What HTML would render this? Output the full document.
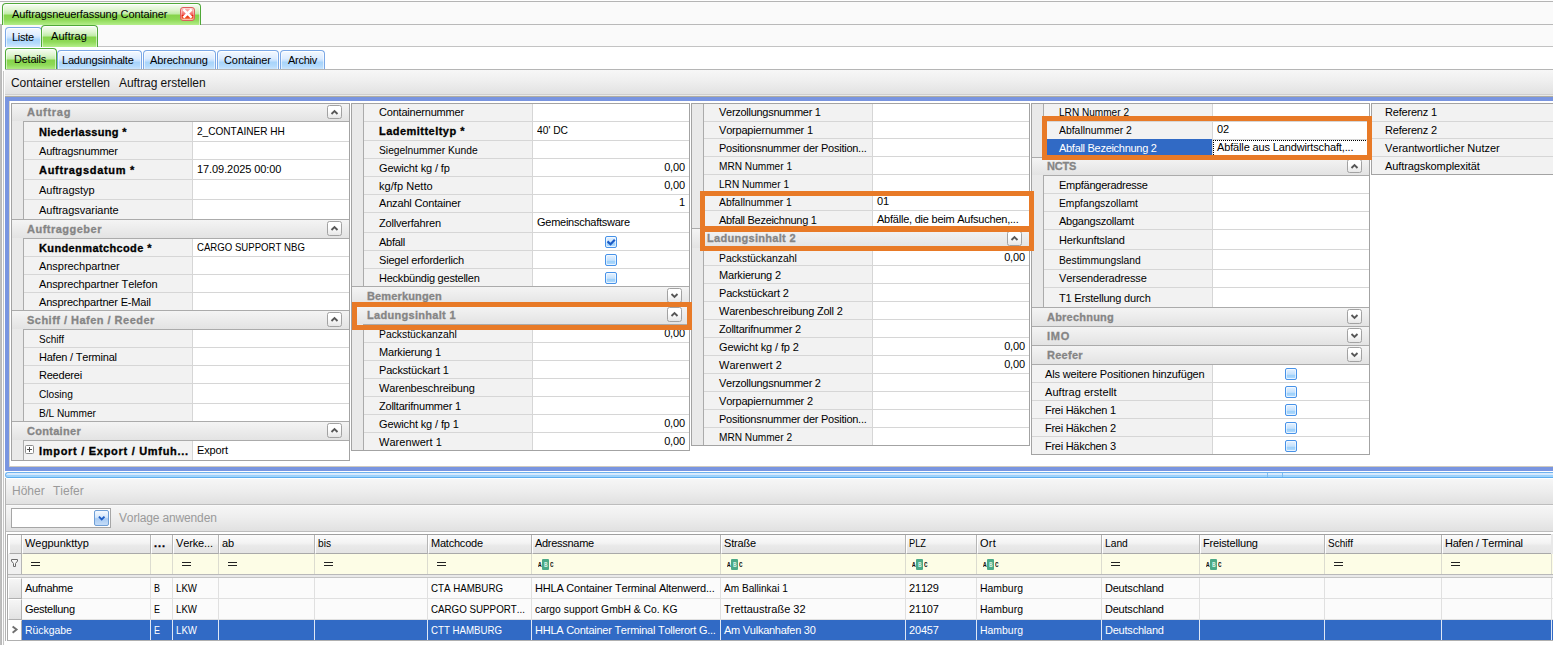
<!DOCTYPE html>
<html lang="de"><head><meta charset="utf-8"><title>Auftragsneuerfassung Container</title><style>
html,body{margin:0;padding:0;}
body{width:1553px;height:645px;overflow:hidden;background:#fff;position:relative;font-family:"Liberation Sans",sans-serif;font-size:11px;color:#000;}
div{position:absolute;}
.g{left:0;top:0;width:0;height:0;}
.t{white-space:nowrap;font-kerning:none;}
</style></head><body>
<div class="g" id="chrome">
<div style="left:0px;top:0px;width:1553px;height:1px;background:#fdfdfd;"></div>
<div style="left:0px;top:1px;width:1553px;height:1px;background:#b4b4b4;"></div>
<div style="left:0px;top:2px;width:1553px;height:22px;background:#fafafa;"></div>
<div style="left:0px;top:24px;width:1553px;height:1px;background:#b9b9b9;"></div>
<div style="left:0px;top:25px;width:1553px;height:21px;background:#fafafa;"></div>
<div style="left:3px;top:46px;width:1553px;height:1px;background:#c3c3c3;"></div>
<div style="left:3px;top:47px;width:1553px;height:22px;background:#fff;"></div>
<div style="left:0px;top:25px;width:2px;height:620px;background:linear-gradient(90deg,#c2c2c2,#b4b4b4);"></div>
<div style="left:2px;top:25px;width:3px;height:620px;background:#fdfdfd;"></div>
<div style="left:3px;top:71px;width:1px;height:574px;background:#c6c6c6;"></div>
</div>
<div class="g" id="tabs">
<div style="left:2px;top:3px;width:199px;height:22px;background:linear-gradient(#f8fdf5 0%,#def5cf 28%,#c2ecaa 46%,#86d44b 54%,#8ed957 75%,#b4ee8a 100%);border:1px solid #4fa838;border-bottom:none;border-radius:4px 4px 0 0;box-sizing:border-box;box-shadow:inset 0 1px 0 #fff,inset 1px 0 0 rgba(255,255,255,0.55),inset -1px 0 0 rgba(255,255,255,0.55);"></div>
<div class="t" style="left:12px;top:4px;height:21px;line-height:21px;letter-spacing:-0.10px;">Auftragsneuerfassung Container</div>
<div style="left:180px;top:7px;width:15px;height:14px;box-sizing:border-box;border:1px solid #de5f5f;border-radius:3px;background:linear-gradient(#fbc0bd 0%,#f78f8a 35%,#f2605a 55%,#e82408 62%,#ee4a20 80%,#ffb692 100%);box-shadow:inset 0 0 0 1px rgba(255,255,255,0.35);"><svg width="13" height="12" viewBox="0 0 13 12" style="position:absolute;left:0;top:0"><path d="M3.3 2.3 L9.7 8.7 M9.7 2.3 L3.3 8.7" stroke="#fff" stroke-width="2.5" stroke-linecap="square"/></svg></div>
<div style="left:5px;top:27px;width:37px;height:20px;background:linear-gradient(#f4f9ff 0%,#dcecff 40%,#c8e2fe 50%,#a8d4fb 60%,#b4dafc 80%,#d2e9ff 100%);border:1px solid #7ba8e6;border-bottom:none;border-radius:4px 4px 0 0;box-sizing:border-box;box-shadow:inset 0 1px 0 #fff,inset 1px 0 0 rgba(255,255,255,0.6),inset -1px 0 0 rgba(255,255,255,0.6);"></div>
<div class="t" style="left:12px;top:28px;height:19px;line-height:19px;letter-spacing:-0.26px;">Liste</div>
<div style="left:41px;top:25px;width:57px;height:22px;background:linear-gradient(#f8fdf5 0%,#def5cf 28%,#c2ecaa 46%,#86d44b 54%,#8ed957 75%,#b4ee8a 100%);border:1px solid #4fa838;border-bottom:none;border-radius:4px 4px 0 0;box-sizing:border-box;box-shadow:inset 0 1px 0 #fff,inset 1px 0 0 rgba(255,255,255,0.55),inset -1px 0 0 rgba(255,255,255,0.55);"></div>
<div class="t" style="left:51px;top:26px;height:21px;line-height:21px;letter-spacing:0.05px;">Auftrag</div>
<div style="left:5px;top:48px;width:52px;height:22px;background:linear-gradient(#f8fdf5 0%,#def5cf 28%,#c2ecaa 46%,#86d44b 54%,#8ed957 75%,#b4ee8a 100%);border:1px solid #4fa838;border-bottom:none;border-radius:4px 4px 0 0;box-sizing:border-box;box-shadow:inset 0 1px 0 #fff,inset 1px 0 0 rgba(255,255,255,0.55),inset -1px 0 0 rgba(255,255,255,0.55);"></div>
<div class="t" style="left:14px;top:49px;height:21px;line-height:21px;letter-spacing:-0.24px;">Details</div>
<div style="left:57px;top:50px;width:85px;height:20px;background:linear-gradient(#f4f9ff 0%,#dcecff 40%,#c8e2fe 50%,#a8d4fb 60%,#b4dafc 80%,#d2e9ff 100%);border:1px solid #7ba8e6;border-bottom:none;border-radius:4px 4px 0 0;box-sizing:border-box;box-shadow:inset 0 1px 0 #fff,inset 1px 0 0 rgba(255,255,255,0.6),inset -1px 0 0 rgba(255,255,255,0.6);"></div>
<div class="t" style="left:62px;top:51px;height:19px;line-height:19px;letter-spacing:-0.22px;">Ladungsinhalte</div>
<div style="left:143px;top:50px;width:73px;height:20px;background:linear-gradient(#f4f9ff 0%,#dcecff 40%,#c8e2fe 50%,#a8d4fb 60%,#b4dafc 80%,#d2e9ff 100%);border:1px solid #7ba8e6;border-bottom:none;border-radius:4px 4px 0 0;box-sizing:border-box;box-shadow:inset 0 1px 0 #fff,inset 1px 0 0 rgba(255,255,255,0.6),inset -1px 0 0 rgba(255,255,255,0.6);"></div>
<div class="t" style="left:150px;top:51px;height:19px;line-height:19px;letter-spacing:-0.16px;">Abrechnung</div>
<div style="left:217px;top:50px;width:62px;height:20px;background:linear-gradient(#f4f9ff 0%,#dcecff 40%,#c8e2fe 50%,#a8d4fb 60%,#b4dafc 80%,#d2e9ff 100%);border:1px solid #7ba8e6;border-bottom:none;border-radius:4px 4px 0 0;box-sizing:border-box;box-shadow:inset 0 1px 0 #fff,inset 1px 0 0 rgba(255,255,255,0.6),inset -1px 0 0 rgba(255,255,255,0.6);"></div>
<div class="t" style="left:224px;top:51px;height:19px;line-height:19px;letter-spacing:-0.09px;">Container</div>
<div style="left:280px;top:50px;width:45px;height:20px;background:linear-gradient(#f4f9ff 0%,#dcecff 40%,#c8e2fe 50%,#a8d4fb 60%,#b4dafc 80%,#d2e9ff 100%);border:1px solid #7ba8e6;border-bottom:none;border-radius:4px 4px 0 0;box-sizing:border-box;box-shadow:inset 0 1px 0 #fff,inset 1px 0 0 rgba(255,255,255,0.6),inset -1px 0 0 rgba(255,255,255,0.6);"></div>
<div class="t" style="left:288px;top:51px;height:19px;line-height:19px;letter-spacing:-0.26px;">Archiv</div>
</div>
<div class="g" id="toolbar-top">
<div style="left:5px;top:69px;width:1548px;height:26px;box-sizing:border-box;border-top:1px solid #b5b5b5;border-bottom:1px solid #cfcfcf;background:linear-gradient(#f7f7f7 0%,#efefef 45%,#e2e2e2 100%);"></div>
<div class="t" style="left:11px;top:71px;height:24px;line-height:24px;font-size:12px;letter-spacing:-0.1px;color:#111;">Container erstellen</div>
<div class="t" style="left:119px;top:71px;height:24px;line-height:24px;font-size:12px;letter-spacing:-0.05px;color:#111;">Auftrag erstellen</div>
<div style="left:5px;top:95px;width:1548px;height:1px;background:#e9e9e6;"></div>
</div>
<div class="g" id="detail-frame">
<div style="left:5px;top:96px;width:1548px;height:1px;background:#b0ada2;"></div>
<div style="left:5px;top:97px;width:1548px;height:374px;background:#7995e0;"></div>
<div style="left:9px;top:101px;width:1544px;height:366px;background:#fff;"></div>
<div style="left:9px;top:101px;width:1px;height:366px;background:#d8d4ca;"></div>
<div style="left:9px;top:466px;width:1544px;height:1px;background:#cfcabf;"></div>
</div>
<div class="g" id="propgrid1">
<div style="left:11px;top:121px;width:12px;height:20px;background:#e9e9e9;"></div>
<div style="left:23px;top:121px;width:1px;height:21px;background:#ababab;"></div>
<div style="left:24px;top:121px;width:168px;height:20px;background:#f2f2f2;border-top:1px solid #d6d6d6;box-sizing:border-box;"></div>
<div style="left:192px;top:121px;width:157px;height:20px;background:#fff;border-top:1px solid #d6d6d6;border-left:1px solid #d6d6d6;box-sizing:border-box;"></div>
<div class="t" style="left:39px;top:123px;height:19px;line-height:19px;font-weight:bold;-webkit-text-stroke:0.3px;letter-spacing:0.31px;color:#000;">Niederlassung *</div>
<div class="t" style="left:197px;top:122px;height:19px;line-height:19px;transform:scaleX(0.916);transform-origin:0 0;">2_CONTAINER HH</div>
<div style="left:11px;top:141px;width:12px;height:18px;background:#e9e9e9;"></div>
<div style="left:23px;top:141px;width:1px;height:19px;background:#ababab;"></div>
<div style="left:24px;top:141px;width:168px;height:18px;background:#f2f2f2;border-top:1px solid #d6d6d6;box-sizing:border-box;"></div>
<div style="left:192px;top:141px;width:157px;height:18px;background:#fff;border-top:1px solid #d6d6d6;border-left:1px solid #d6d6d6;box-sizing:border-box;"></div>
<div class="t" style="left:39px;top:143px;height:17px;line-height:17px;letter-spacing:-0.18px;">Auftragsnummer</div>
<div style="left:11px;top:159px;width:12px;height:20px;background:#e9e9e9;"></div>
<div style="left:23px;top:159px;width:1px;height:21px;background:#ababab;"></div>
<div style="left:24px;top:159px;width:168px;height:20px;background:#f2f2f2;border-top:1px solid #d6d6d6;box-sizing:border-box;"></div>
<div style="left:192px;top:159px;width:157px;height:20px;background:#fff;border-top:1px solid #d6d6d6;border-left:1px solid #d6d6d6;box-sizing:border-box;"></div>
<div class="t" style="left:39px;top:161px;height:19px;line-height:19px;font-weight:bold;-webkit-text-stroke:0.3px;letter-spacing:0.69px;color:#000;">Auftragsdatum *</div>
<div class="t" style="left:197px;top:160px;height:19px;line-height:19px;letter-spacing:-0.08px;">17.09.2025 00:00</div>
<div style="left:11px;top:179px;width:12px;height:20px;background:#e9e9e9;"></div>
<div style="left:23px;top:179px;width:1px;height:21px;background:#ababab;"></div>
<div style="left:24px;top:179px;width:168px;height:20px;background:#f2f2f2;border-top:1px solid #d6d6d6;box-sizing:border-box;"></div>
<div style="left:192px;top:179px;width:157px;height:20px;background:#fff;border-top:1px solid #d6d6d6;border-left:1px solid #d6d6d6;box-sizing:border-box;"></div>
<div class="t" style="left:39px;top:181px;height:19px;line-height:19px;letter-spacing:0.01px;">Auftragstyp</div>
<div style="left:11px;top:199px;width:12px;height:20px;background:#e9e9e9;"></div>
<div style="left:23px;top:199px;width:1px;height:21px;background:#ababab;"></div>
<div style="left:24px;top:199px;width:168px;height:20px;background:#f2f2f2;border-top:1px solid #d6d6d6;box-sizing:border-box;"></div>
<div style="left:192px;top:199px;width:157px;height:20px;background:#fff;border-top:1px solid #d6d6d6;border-left:1px solid #d6d6d6;box-sizing:border-box;"></div>
<div class="t" style="left:39px;top:201px;height:19px;line-height:19px;letter-spacing:-0.03px;">Auftragsvariante</div>
<div style="left:11px;top:238px;width:12px;height:18px;background:#e9e9e9;"></div>
<div style="left:23px;top:238px;width:1px;height:19px;background:#ababab;"></div>
<div style="left:24px;top:238px;width:168px;height:18px;background:#f2f2f2;border-top:1px solid #d6d6d6;box-sizing:border-box;"></div>
<div style="left:192px;top:238px;width:157px;height:18px;background:#fff;border-top:1px solid #d6d6d6;border-left:1px solid #d6d6d6;box-sizing:border-box;"></div>
<div class="t" style="left:39px;top:240px;height:17px;line-height:17px;font-weight:bold;-webkit-text-stroke:0.3px;letter-spacing:0.38px;color:#000;">Kundenmatchcode *</div>
<div class="t" style="left:197px;top:239px;height:17px;line-height:17px;transform:scaleX(0.874);transform-origin:0 0;">CARGO SUPPORT NBG</div>
<div style="left:11px;top:256px;width:12px;height:18px;background:#e9e9e9;"></div>
<div style="left:23px;top:256px;width:1px;height:19px;background:#ababab;"></div>
<div style="left:24px;top:256px;width:168px;height:18px;background:#f2f2f2;border-top:1px solid #d6d6d6;box-sizing:border-box;"></div>
<div style="left:192px;top:256px;width:157px;height:18px;background:#fff;border-top:1px solid #d6d6d6;border-left:1px solid #d6d6d6;box-sizing:border-box;"></div>
<div class="t" style="left:39px;top:258px;height:17px;line-height:17px;letter-spacing:-0.04px;">Ansprechpartner</div>
<div style="left:11px;top:274px;width:12px;height:18px;background:#e9e9e9;"></div>
<div style="left:23px;top:274px;width:1px;height:19px;background:#ababab;"></div>
<div style="left:24px;top:274px;width:168px;height:18px;background:#f2f2f2;border-top:1px solid #d6d6d6;box-sizing:border-box;"></div>
<div style="left:192px;top:274px;width:157px;height:18px;background:#fff;border-top:1px solid #d6d6d6;border-left:1px solid #d6d6d6;box-sizing:border-box;"></div>
<div class="t" style="left:39px;top:276px;height:17px;line-height:17px;letter-spacing:-0.11px;">Ansprechpartner Telefon</div>
<div style="left:11px;top:292px;width:12px;height:18px;background:#e9e9e9;"></div>
<div style="left:23px;top:292px;width:1px;height:19px;background:#ababab;"></div>
<div style="left:24px;top:292px;width:168px;height:18px;background:#f2f2f2;border-top:1px solid #d6d6d6;box-sizing:border-box;"></div>
<div style="left:192px;top:292px;width:157px;height:18px;background:#fff;border-top:1px solid #d6d6d6;border-left:1px solid #d6d6d6;box-sizing:border-box;"></div>
<div class="t" style="left:39px;top:294px;height:17px;line-height:17px;letter-spacing:-0.17px;">Ansprechpartner E-Mail</div>
<div style="left:11px;top:329px;width:12px;height:18px;background:#e9e9e9;"></div>
<div style="left:23px;top:329px;width:1px;height:19px;background:#ababab;"></div>
<div style="left:24px;top:329px;width:168px;height:18px;background:#f2f2f2;border-top:1px solid #d6d6d6;box-sizing:border-box;"></div>
<div style="left:192px;top:329px;width:157px;height:18px;background:#fff;border-top:1px solid #d6d6d6;border-left:1px solid #d6d6d6;box-sizing:border-box;"></div>
<div class="t" style="left:39px;top:331px;height:17px;line-height:17px;transform:scaleX(0.906);transform-origin:0 0;">Schiff</div>
<div style="left:11px;top:347px;width:12px;height:18px;background:#e9e9e9;"></div>
<div style="left:23px;top:347px;width:1px;height:19px;background:#ababab;"></div>
<div style="left:24px;top:347px;width:168px;height:18px;background:#f2f2f2;border-top:1px solid #d6d6d6;box-sizing:border-box;"></div>
<div style="left:192px;top:347px;width:157px;height:18px;background:#fff;border-top:1px solid #d6d6d6;border-left:1px solid #d6d6d6;box-sizing:border-box;"></div>
<div class="t" style="left:39px;top:349px;height:17px;line-height:17px;letter-spacing:-0.22px;">Hafen / Terminal</div>
<div style="left:11px;top:365px;width:12px;height:18px;background:#e9e9e9;"></div>
<div style="left:23px;top:365px;width:1px;height:19px;background:#ababab;"></div>
<div style="left:24px;top:365px;width:168px;height:18px;background:#f2f2f2;border-top:1px solid #d6d6d6;box-sizing:border-box;"></div>
<div style="left:192px;top:365px;width:157px;height:18px;background:#fff;border-top:1px solid #d6d6d6;border-left:1px solid #d6d6d6;box-sizing:border-box;"></div>
<div class="t" style="left:39px;top:367px;height:17px;line-height:17px;letter-spacing:-0.22px;">Reederei</div>
<div style="left:11px;top:383px;width:12px;height:20px;background:#e9e9e9;"></div>
<div style="left:23px;top:383px;width:1px;height:21px;background:#ababab;"></div>
<div style="left:24px;top:383px;width:168px;height:20px;background:#f2f2f2;border-top:1px solid #d6d6d6;box-sizing:border-box;"></div>
<div style="left:192px;top:383px;width:157px;height:20px;background:#fff;border-top:1px solid #d6d6d6;border-left:1px solid #d6d6d6;box-sizing:border-box;"></div>
<div class="t" style="left:39px;top:385px;height:19px;line-height:19px;transform:scaleX(0.925);transform-origin:0 0;">Closing</div>
<div style="left:11px;top:403px;width:12px;height:18px;background:#e9e9e9;"></div>
<div style="left:23px;top:403px;width:1px;height:19px;background:#ababab;"></div>
<div style="left:24px;top:403px;width:168px;height:18px;background:#f2f2f2;border-top:1px solid #d6d6d6;box-sizing:border-box;"></div>
<div style="left:192px;top:403px;width:157px;height:18px;background:#fff;border-top:1px solid #d6d6d6;border-left:1px solid #d6d6d6;box-sizing:border-box;"></div>
<div class="t" style="left:39px;top:405px;height:17px;line-height:17px;transform:scaleX(0.922);transform-origin:0 0;">B/L Nummer</div>
<div style="left:11px;top:440px;width:12px;height:20px;background:#e9e9e9;"></div>
<div style="left:23px;top:440px;width:1px;height:21px;background:#ababab;"></div>
<div style="left:24px;top:440px;width:168px;height:20px;background:#f2f2f2;border-top:1px solid #d6d6d6;box-sizing:border-box;"></div>
<div style="left:192px;top:440px;width:157px;height:20px;background:#fff;border-top:1px solid #d6d6d6;border-left:1px solid #d6d6d6;box-sizing:border-box;"></div>
<div class="t" style="left:39px;top:442px;height:19px;line-height:19px;font-weight:bold;-webkit-text-stroke:0.3px;letter-spacing:0.71px;color:#000;">Import / Export / Umfuh...</div>
<div class="t" style="left:197px;top:441px;height:19px;line-height:19px;letter-spacing:-0.15px;">Export</div>
<div style="left:25px;top:445px;width:9px;height:9px;box-sizing:border-box;border:1px solid #8c8c8c;border-radius:1.5px;background:#fff;"><div style="position:absolute;left:1px;top:3px;width:5px;height:1px;background:#4c4c4c"></div><div style="position:absolute;left:3px;top:1px;width:1px;height:5px;background:#4c4c4c"></div></div>
<div style="left:11px;top:103px;width:339px;height:18px;border-top:1px solid #ababab;box-sizing:border-box;background:linear-gradient(#f4f4f4,#e3e3e3);"></div>
<div style="left:23px;top:121px;width:327px;height:1px;background:#ababab;"></div>
<div class="t" style="left:27px;top:104px;height:17px;line-height:17px;font-weight:bold;-webkit-text-stroke:0.3px;letter-spacing:0.71px;color:#858585;">Auftrag</div>
<div style="left:327px;top:105px;width:15px;height:14px;box-sizing:border-box;border:1px solid #a2a2a2;border-radius:2.5px;background:linear-gradient(#ffffff 40%,#e6e6e6);"><svg width="15" height="15" viewBox="0 0 15 15" style="position:absolute;left:-1px;top:-1px"><path d="M4.5 9.0 L7.5 6.0 L10.5 9.0" fill="none" stroke="#585858" stroke-width="1.9"/></svg></div>
<div style="left:11px;top:219px;width:339px;height:19px;border-top:1px solid #ababab;box-sizing:border-box;background:linear-gradient(#f4f4f4,#e3e3e3);"></div>
<div style="left:23px;top:238px;width:327px;height:1px;background:#ababab;"></div>
<div class="t" style="left:27px;top:220px;height:18px;line-height:18px;font-weight:bold;-webkit-text-stroke:0.3px;letter-spacing:0.49px;color:#858585;">Auftraggeber</div>
<div style="left:327px;top:221px;width:15px;height:15px;box-sizing:border-box;border:1px solid #a2a2a2;border-radius:2.5px;background:linear-gradient(#ffffff 40%,#e6e6e6);"><svg width="15" height="15" viewBox="0 0 15 15" style="position:absolute;left:-1px;top:-1px"><path d="M4.5 9.0 L7.5 6.0 L10.5 9.0" fill="none" stroke="#585858" stroke-width="1.9"/></svg></div>
<div style="left:11px;top:310px;width:339px;height:19px;border-top:1px solid #ababab;box-sizing:border-box;background:linear-gradient(#f4f4f4,#e3e3e3);"></div>
<div style="left:23px;top:329px;width:327px;height:1px;background:#ababab;"></div>
<div class="t" style="left:27px;top:311px;height:18px;line-height:18px;font-weight:bold;-webkit-text-stroke:0.3px;letter-spacing:0.48px;color:#858585;">Schiff / Hafen / Reeder</div>
<div style="left:327px;top:312px;width:15px;height:15px;box-sizing:border-box;border:1px solid #a2a2a2;border-radius:2.5px;background:linear-gradient(#ffffff 40%,#e6e6e6);"><svg width="15" height="15" viewBox="0 0 15 15" style="position:absolute;left:-1px;top:-1px"><path d="M4.5 9.0 L7.5 6.0 L10.5 9.0" fill="none" stroke="#585858" stroke-width="1.9"/></svg></div>
<div style="left:11px;top:421px;width:339px;height:19px;border-top:1px solid #ababab;box-sizing:border-box;background:linear-gradient(#f4f4f4,#e3e3e3);"></div>
<div style="left:23px;top:440px;width:327px;height:1px;background:#ababab;"></div>
<div class="t" style="left:27px;top:422px;height:18px;line-height:18px;font-weight:bold;-webkit-text-stroke:0.3px;letter-spacing:0.29px;color:#858585;">Container</div>
<div style="left:327px;top:423px;width:15px;height:15px;box-sizing:border-box;border:1px solid #a2a2a2;border-radius:2.5px;background:linear-gradient(#ffffff 40%,#e6e6e6);"><svg width="15" height="15" viewBox="0 0 15 15" style="position:absolute;left:-1px;top:-1px"><path d="M4.5 9.0 L7.5 6.0 L10.5 9.0" fill="none" stroke="#585858" stroke-width="1.9"/></svg></div>
<div style="left:11px;top:103px;width:339px;height:358px;box-sizing:border-box;border:solid #a3a3a3;border-width:1px;"></div>
</div>
<div class="g" id="propgrid2">
<div style="left:351px;top:103px;width:12px;height:18px;background:#e9e9e9;"></div>
<div style="left:363px;top:103px;width:1px;height:19px;background:#ababab;"></div>
<div style="left:364px;top:103px;width:168px;height:18px;background:#f2f2f2;border-top:1px solid #d6d6d6;box-sizing:border-box;"></div>
<div style="left:532px;top:103px;width:157px;height:18px;background:#fff;border-top:1px solid #d6d6d6;border-left:1px solid #d6d6d6;box-sizing:border-box;"></div>
<div class="t" style="left:379px;top:104px;height:17px;line-height:17px;letter-spacing:-0.21px;">Containernummer</div>
<div style="left:351px;top:121px;width:12px;height:19px;background:#e9e9e9;"></div>
<div style="left:363px;top:121px;width:1px;height:20px;background:#ababab;"></div>
<div style="left:364px;top:121px;width:168px;height:19px;background:#f2f2f2;border-top:1px solid #d6d6d6;box-sizing:border-box;"></div>
<div style="left:532px;top:121px;width:157px;height:19px;background:#fff;border-top:1px solid #d6d6d6;border-left:1px solid #d6d6d6;box-sizing:border-box;"></div>
<div class="t" style="left:379px;top:122px;height:18px;line-height:18px;font-weight:bold;-webkit-text-stroke:0.3px;letter-spacing:0.47px;color:#000;">Lademitteltyp *</div>
<div class="t" style="left:537px;top:121px;height:18px;line-height:18px;transform:scaleX(0.930);transform-origin:0 0;">40&#x27; DC</div>
<div style="left:351px;top:140px;width:12px;height:18px;background:#e9e9e9;"></div>
<div style="left:363px;top:140px;width:1px;height:19px;background:#ababab;"></div>
<div style="left:364px;top:140px;width:168px;height:18px;background:#f2f2f2;border-top:1px solid #d6d6d6;box-sizing:border-box;"></div>
<div style="left:532px;top:140px;width:157px;height:18px;background:#fff;border-top:1px solid #d6d6d6;border-left:1px solid #d6d6d6;box-sizing:border-box;"></div>
<div class="t" style="left:379px;top:142px;height:17px;line-height:17px;transform:scaleX(0.933);transform-origin:0 0;">Siegelnummer Kunde</div>
<div style="left:351px;top:158px;width:12px;height:18px;background:#e9e9e9;"></div>
<div style="left:363px;top:158px;width:1px;height:19px;background:#ababab;"></div>
<div style="left:364px;top:158px;width:168px;height:18px;background:#f2f2f2;border-top:1px solid #d6d6d6;box-sizing:border-box;"></div>
<div style="left:532px;top:158px;width:157px;height:18px;background:#fff;border-top:1px solid #d6d6d6;border-left:1px solid #d6d6d6;box-sizing:border-box;"></div>
<div class="t" style="left:379px;top:160px;height:17px;line-height:17px;letter-spacing:-0.14px;">Gewicht kg / fp</div>
<div class="t" style="left:534px;top:159px;width:151px;text-align:right;height:17px;line-height:17px;letter-spacing:-0.14px;">0,00</div>
<div style="left:351px;top:176px;width:12px;height:18px;background:#e9e9e9;"></div>
<div style="left:363px;top:176px;width:1px;height:19px;background:#ababab;"></div>
<div style="left:364px;top:176px;width:168px;height:18px;background:#f2f2f2;border-top:1px solid #d6d6d6;box-sizing:border-box;"></div>
<div style="left:532px;top:176px;width:157px;height:18px;background:#fff;border-top:1px solid #d6d6d6;border-left:1px solid #d6d6d6;box-sizing:border-box;"></div>
<div class="t" style="left:379px;top:178px;height:17px;line-height:17px;letter-spacing:0.05px;">kg/fp Netto</div>
<div class="t" style="left:534px;top:177px;width:151px;text-align:right;height:17px;line-height:17px;letter-spacing:-0.14px;">0,00</div>
<div style="left:351px;top:194px;width:12px;height:18px;background:#e9e9e9;"></div>
<div style="left:363px;top:194px;width:1px;height:19px;background:#ababab;"></div>
<div style="left:364px;top:194px;width:168px;height:18px;background:#f2f2f2;border-top:1px solid #d6d6d6;box-sizing:border-box;"></div>
<div style="left:532px;top:194px;width:157px;height:18px;background:#fff;border-top:1px solid #d6d6d6;border-left:1px solid #d6d6d6;box-sizing:border-box;"></div>
<div class="t" style="left:379px;top:195px;height:17px;line-height:17px;letter-spacing:-0.17px;">Anzahl Container</div>
<div class="t" style="left:534px;top:194px;width:151px;text-align:right;height:17px;line-height:17px;letter-spacing:-0.16px;">1</div>
<div style="left:351px;top:212px;width:12px;height:20px;background:#e9e9e9;"></div>
<div style="left:363px;top:212px;width:1px;height:21px;background:#ababab;"></div>
<div style="left:364px;top:212px;width:168px;height:20px;background:#f2f2f2;border-top:1px solid #d6d6d6;box-sizing:border-box;"></div>
<div style="left:532px;top:212px;width:157px;height:20px;background:#fff;border-top:1px solid #d6d6d6;border-left:1px solid #d6d6d6;box-sizing:border-box;"></div>
<div class="t" style="left:379px;top:214px;height:19px;line-height:19px;letter-spacing:-0.18px;">Zollverfahren</div>
<div class="t" style="left:537px;top:213px;height:19px;line-height:19px;letter-spacing:-0.26px;">Gemeinschaftsware</div>
<div style="left:351px;top:232px;width:12px;height:18px;background:#e9e9e9;"></div>
<div style="left:363px;top:232px;width:1px;height:19px;background:#ababab;"></div>
<div style="left:364px;top:232px;width:168px;height:18px;background:#f2f2f2;border-top:1px solid #d6d6d6;box-sizing:border-box;"></div>
<div style="left:532px;top:232px;width:157px;height:18px;background:#fff;border-top:1px solid #d6d6d6;border-left:1px solid #d6d6d6;box-sizing:border-box;"></div>
<div class="t" style="left:379px;top:234px;height:17px;line-height:17px;letter-spacing:-0.27px;">Abfall</div>
<div style="left:605px;top:236px;width:10px;height:10px;border:1px solid #4792e8;border-radius:2px;background:linear-gradient(#e6f2ff 0%,#c4e1fd 54%,#9bd0fb 60%,#a8d6fc 84%,#d8ecff 100%);box-shadow:inset 0 0 0 1px rgba(255,255,255,0.55);"><svg width="12" height="12" viewBox="0 0 12 12" style="position:absolute;left:-1px;top:-1px"><path d="M2.5 5.4 L5.5 8.2 L9.8 3.7" fill="none" stroke="#1b5cc6" stroke-width="2.2"/></svg></div>
<div style="left:351px;top:250px;width:12px;height:18px;background:#e9e9e9;"></div>
<div style="left:363px;top:250px;width:1px;height:19px;background:#ababab;"></div>
<div style="left:364px;top:250px;width:168px;height:18px;background:#f2f2f2;border-top:1px solid #d6d6d6;box-sizing:border-box;"></div>
<div style="left:532px;top:250px;width:157px;height:18px;background:#fff;border-top:1px solid #d6d6d6;border-left:1px solid #d6d6d6;box-sizing:border-box;"></div>
<div class="t" style="left:379px;top:252px;height:17px;line-height:17px;letter-spacing:-0.20px;">Siegel erforderlich</div>
<div style="left:605px;top:254px;width:10px;height:10px;border:1px solid #4792e8;border-radius:2px;background:linear-gradient(#e6f2ff 0%,#c4e1fd 54%,#9bd0fb 60%,#a8d6fc 84%,#d8ecff 100%);box-shadow:inset 0 0 0 1px rgba(255,255,255,0.55);"></div>
<div style="left:351px;top:268px;width:12px;height:18px;background:#e9e9e9;"></div>
<div style="left:363px;top:268px;width:1px;height:19px;background:#ababab;"></div>
<div style="left:364px;top:268px;width:168px;height:18px;background:#f2f2f2;border-top:1px solid #d6d6d6;box-sizing:border-box;"></div>
<div style="left:532px;top:268px;width:157px;height:18px;background:#fff;border-top:1px solid #d6d6d6;border-left:1px solid #d6d6d6;box-sizing:border-box;"></div>
<div class="t" style="left:379px;top:270px;height:17px;line-height:17px;letter-spacing:-0.23px;">Heckbündig gestellen</div>
<div style="left:605px;top:272px;width:10px;height:10px;border:1px solid #4792e8;border-radius:2px;background:linear-gradient(#e6f2ff 0%,#c4e1fd 54%,#9bd0fb 60%,#a8d6fc 84%,#d8ecff 100%);box-shadow:inset 0 0 0 1px rgba(255,255,255,0.55);"></div>
<div style="left:351px;top:324px;width:12px;height:18px;background:#e9e9e9;"></div>
<div style="left:363px;top:324px;width:1px;height:19px;background:#ababab;"></div>
<div style="left:364px;top:324px;width:168px;height:18px;background:#f2f2f2;border-top:1px solid #d6d6d6;box-sizing:border-box;"></div>
<div style="left:532px;top:324px;width:157px;height:18px;background:#fff;border-top:1px solid #d6d6d6;border-left:1px solid #d6d6d6;box-sizing:border-box;"></div>
<div class="t" style="left:379px;top:326px;height:17px;line-height:17px;transform:scaleX(0.942);transform-origin:0 0;">Packstückanzahl</div>
<div class="t" style="left:534px;top:325px;width:151px;text-align:right;height:17px;line-height:17px;letter-spacing:-0.14px;">0,00</div>
<div style="left:351px;top:342px;width:12px;height:18px;background:#e9e9e9;"></div>
<div style="left:363px;top:342px;width:1px;height:19px;background:#ababab;"></div>
<div style="left:364px;top:342px;width:168px;height:18px;background:#f2f2f2;border-top:1px solid #d6d6d6;box-sizing:border-box;"></div>
<div style="left:532px;top:342px;width:157px;height:18px;background:#fff;border-top:1px solid #d6d6d6;border-left:1px solid #d6d6d6;box-sizing:border-box;"></div>
<div class="t" style="left:379px;top:344px;height:17px;line-height:17px;letter-spacing:-0.20px;">Markierung 1</div>
<div style="left:351px;top:360px;width:12px;height:18px;background:#e9e9e9;"></div>
<div style="left:363px;top:360px;width:1px;height:19px;background:#ababab;"></div>
<div style="left:364px;top:360px;width:168px;height:18px;background:#f2f2f2;border-top:1px solid #d6d6d6;box-sizing:border-box;"></div>
<div style="left:532px;top:360px;width:157px;height:18px;background:#fff;border-top:1px solid #d6d6d6;border-left:1px solid #d6d6d6;box-sizing:border-box;"></div>
<div class="t" style="left:379px;top:362px;height:17px;line-height:17px;letter-spacing:-0.17px;">Packstückart 1</div>
<div style="left:351px;top:378px;width:12px;height:18px;background:#e9e9e9;"></div>
<div style="left:363px;top:378px;width:1px;height:19px;background:#ababab;"></div>
<div style="left:364px;top:378px;width:168px;height:18px;background:#f2f2f2;border-top:1px solid #d6d6d6;box-sizing:border-box;"></div>
<div style="left:532px;top:378px;width:157px;height:18px;background:#fff;border-top:1px solid #d6d6d6;border-left:1px solid #d6d6d6;box-sizing:border-box;"></div>
<div class="t" style="left:379px;top:380px;height:17px;line-height:17px;letter-spacing:-0.16px;">Warenbeschreibung</div>
<div style="left:351px;top:396px;width:12px;height:18px;background:#e9e9e9;"></div>
<div style="left:363px;top:396px;width:1px;height:19px;background:#ababab;"></div>
<div style="left:364px;top:396px;width:168px;height:18px;background:#f2f2f2;border-top:1px solid #d6d6d6;box-sizing:border-box;"></div>
<div style="left:532px;top:396px;width:157px;height:18px;background:#fff;border-top:1px solid #d6d6d6;border-left:1px solid #d6d6d6;box-sizing:border-box;"></div>
<div class="t" style="left:379px;top:398px;height:17px;line-height:17px;letter-spacing:-0.22px;">Zolltarifnummer 1</div>
<div style="left:351px;top:414px;width:12px;height:18px;background:#e9e9e9;"></div>
<div style="left:363px;top:414px;width:1px;height:19px;background:#ababab;"></div>
<div style="left:364px;top:414px;width:168px;height:18px;background:#f2f2f2;border-top:1px solid #d6d6d6;box-sizing:border-box;"></div>
<div style="left:532px;top:414px;width:157px;height:18px;background:#fff;border-top:1px solid #d6d6d6;border-left:1px solid #d6d6d6;box-sizing:border-box;"></div>
<div class="t" style="left:379px;top:416px;height:17px;line-height:17px;letter-spacing:-0.13px;">Gewicht kg / fp 1</div>
<div class="t" style="left:534px;top:415px;width:151px;text-align:right;height:17px;line-height:17px;letter-spacing:-0.14px;">0,00</div>
<div style="left:351px;top:432px;width:12px;height:18px;background:#e9e9e9;"></div>
<div style="left:363px;top:432px;width:1px;height:19px;background:#ababab;"></div>
<div style="left:364px;top:432px;width:168px;height:18px;background:#f2f2f2;border-top:1px solid #d6d6d6;box-sizing:border-box;"></div>
<div style="left:532px;top:432px;width:157px;height:18px;background:#fff;border-top:1px solid #d6d6d6;border-left:1px solid #d6d6d6;box-sizing:border-box;"></div>
<div class="t" style="left:379px;top:434px;height:17px;line-height:17px;letter-spacing:0.05px;">Warenwert 1</div>
<div class="t" style="left:534px;top:433px;width:151px;text-align:right;height:17px;line-height:17px;letter-spacing:-0.14px;">0,00</div>
<div style="left:351px;top:286px;width:339px;height:19px;border-top:1px solid #ababab;box-sizing:border-box;background:linear-gradient(#f4f4f4,#e3e3e3);"></div>
<div class="t" style="left:367px;top:287px;height:18px;line-height:18px;font-weight:bold;-webkit-text-stroke:0.3px;letter-spacing:0.14px;color:#858585;">Bemerkungen</div>
<div style="left:667px;top:288px;width:15px;height:15px;box-sizing:border-box;border:1px solid #a2a2a2;border-radius:2.5px;background:linear-gradient(#ffffff 40%,#e6e6e6);"><svg width="15" height="15" viewBox="0 0 15 15" style="position:absolute;left:-1px;top:-1px"><path d="M4.5 6.0 L7.5 9.0 L10.5 6.0" fill="none" stroke="#585858" stroke-width="1.9"/></svg></div>
<div style="left:351px;top:305px;width:339px;height:19px;border-top:1px solid #ababab;box-sizing:border-box;background:linear-gradient(#f4f4f4,#e3e3e3);"></div>
<div style="left:363px;top:324px;width:327px;height:1px;background:#ababab;"></div>
<div class="t" style="left:367px;top:306px;height:18px;line-height:18px;font-weight:bold;-webkit-text-stroke:0.3px;letter-spacing:0.30px;color:#858585;">Ladungsinhalt 1</div>
<div style="left:667px;top:307px;width:15px;height:15px;box-sizing:border-box;border:1px solid #a2a2a2;border-radius:2.5px;background:linear-gradient(#ffffff 40%,#e6e6e6);"><svg width="15" height="15" viewBox="0 0 15 15" style="position:absolute;left:-1px;top:-1px"><path d="M4.5 9.0 L7.5 6.0 L10.5 9.0" fill="none" stroke="#585858" stroke-width="1.9"/></svg></div>
<div style="left:351px;top:103px;width:339px;height:348px;box-sizing:border-box;border:solid #a3a3a3;border-width:1px;"></div>
</div>
<div class="g" id="propgrid3">
<div style="left:691px;top:103px;width:12px;height:18px;background:#e9e9e9;"></div>
<div style="left:703px;top:103px;width:1px;height:19px;background:#ababab;"></div>
<div style="left:704px;top:103px;width:168px;height:18px;background:#f2f2f2;border-top:1px solid #d6d6d6;box-sizing:border-box;"></div>
<div style="left:872px;top:103px;width:157px;height:18px;background:#fff;border-top:1px solid #d6d6d6;border-left:1px solid #d6d6d6;box-sizing:border-box;"></div>
<div class="t" style="left:719px;top:104px;height:17px;line-height:17px;letter-spacing:-0.28px;">Verzollungsnummer 1</div>
<div style="left:691px;top:121px;width:12px;height:17px;background:#e9e9e9;"></div>
<div style="left:703px;top:121px;width:1px;height:18px;background:#ababab;"></div>
<div style="left:704px;top:121px;width:168px;height:17px;background:#f2f2f2;border-top:1px solid #d6d6d6;box-sizing:border-box;"></div>
<div style="left:872px;top:121px;width:157px;height:17px;background:#fff;border-top:1px solid #d6d6d6;border-left:1px solid #d6d6d6;box-sizing:border-box;"></div>
<div class="t" style="left:719px;top:122px;height:16px;line-height:16px;letter-spacing:-0.20px;">Vorpapiernummer 1</div>
<div style="left:691px;top:138px;width:12px;height:18px;background:#e9e9e9;"></div>
<div style="left:703px;top:138px;width:1px;height:19px;background:#ababab;"></div>
<div style="left:704px;top:138px;width:168px;height:18px;background:#f2f2f2;border-top:1px solid #d6d6d6;box-sizing:border-box;"></div>
<div style="left:872px;top:138px;width:157px;height:18px;background:#fff;border-top:1px solid #d6d6d6;border-left:1px solid #d6d6d6;box-sizing:border-box;"></div>
<div class="t" style="left:719px;top:140px;height:17px;line-height:17px;letter-spacing:-0.25px;">Positionsnummer der Position...</div>
<div style="left:691px;top:156px;width:12px;height:18px;background:#e9e9e9;"></div>
<div style="left:703px;top:156px;width:1px;height:19px;background:#ababab;"></div>
<div style="left:704px;top:156px;width:168px;height:18px;background:#f2f2f2;border-top:1px solid #d6d6d6;box-sizing:border-box;"></div>
<div style="left:872px;top:156px;width:157px;height:18px;background:#fff;border-top:1px solid #d6d6d6;border-left:1px solid #d6d6d6;box-sizing:border-box;"></div>
<div class="t" style="left:719px;top:158px;height:17px;line-height:17px;transform:scaleX(0.919);transform-origin:0 0;">MRN Nummer 1</div>
<div style="left:691px;top:174px;width:12px;height:18px;background:#e9e9e9;"></div>
<div style="left:703px;top:174px;width:1px;height:19px;background:#ababab;"></div>
<div style="left:704px;top:174px;width:168px;height:18px;background:#f2f2f2;border-top:1px solid #d6d6d6;box-sizing:border-box;"></div>
<div style="left:872px;top:174px;width:157px;height:18px;background:#fff;border-top:1px solid #d6d6d6;border-left:1px solid #d6d6d6;box-sizing:border-box;"></div>
<div class="t" style="left:719px;top:176px;height:17px;line-height:17px;transform:scaleX(0.916);transform-origin:0 0;">LRN Nummer 1</div>
<div style="left:691px;top:192px;width:12px;height:18px;background:#e9e9e9;"></div>
<div style="left:703px;top:192px;width:1px;height:19px;background:#ababab;"></div>
<div style="left:704px;top:192px;width:168px;height:18px;background:#f2f2f2;border-top:1px solid #d6d6d6;box-sizing:border-box;"></div>
<div style="left:872px;top:192px;width:157px;height:18px;background:#fff;border-top:1px solid #d6d6d6;border-left:1px solid #d6d6d6;box-sizing:border-box;"></div>
<div class="t" style="left:719px;top:194px;height:17px;line-height:17px;transform:scaleX(0.945);transform-origin:0 0;">Abfallnummer 1</div>
<div class="t" style="left:877px;top:193px;height:17px;line-height:17px;letter-spacing:-0.16px;">01</div>
<div style="left:691px;top:210px;width:12px;height:18px;background:#e9e9e9;"></div>
<div style="left:703px;top:210px;width:1px;height:19px;background:#ababab;"></div>
<div style="left:704px;top:210px;width:168px;height:18px;background:#f2f2f2;border-top:1px solid #d6d6d6;box-sizing:border-box;"></div>
<div style="left:872px;top:210px;width:157px;height:18px;background:#fff;border-top:1px solid #d6d6d6;border-left:1px solid #d6d6d6;box-sizing:border-box;"></div>
<div class="t" style="left:719px;top:212px;height:17px;line-height:17px;letter-spacing:-0.29px;">Abfall Bezeichnung 1</div>
<div class="t" style="left:877px;top:211px;height:17px;line-height:17px;letter-spacing:-0.23px;">Abfälle, die beim Aufsuchen,...</div>
<div style="left:691px;top:248px;width:12px;height:17px;background:#e9e9e9;"></div>
<div style="left:703px;top:248px;width:1px;height:18px;background:#ababab;"></div>
<div style="left:704px;top:248px;width:168px;height:17px;background:#f2f2f2;border-top:1px solid #d6d6d6;box-sizing:border-box;"></div>
<div style="left:872px;top:248px;width:157px;height:17px;background:#fff;border-top:1px solid #d6d6d6;border-left:1px solid #d6d6d6;box-sizing:border-box;"></div>
<div class="t" style="left:719px;top:250px;height:16px;line-height:16px;transform:scaleX(0.942);transform-origin:0 0;">Packstückanzahl</div>
<div class="t" style="left:874px;top:249px;width:151px;text-align:right;height:16px;line-height:16px;letter-spacing:-0.14px;">0,00</div>
<div style="left:691px;top:265px;width:12px;height:18px;background:#e9e9e9;"></div>
<div style="left:703px;top:265px;width:1px;height:19px;background:#ababab;"></div>
<div style="left:704px;top:265px;width:168px;height:18px;background:#f2f2f2;border-top:1px solid #d6d6d6;box-sizing:border-box;"></div>
<div style="left:872px;top:265px;width:157px;height:18px;background:#fff;border-top:1px solid #d6d6d6;border-left:1px solid #d6d6d6;box-sizing:border-box;"></div>
<div class="t" style="left:719px;top:267px;height:17px;line-height:17px;letter-spacing:-0.20px;">Markierung 2</div>
<div style="left:691px;top:283px;width:12px;height:18px;background:#e9e9e9;"></div>
<div style="left:703px;top:283px;width:1px;height:19px;background:#ababab;"></div>
<div style="left:704px;top:283px;width:168px;height:18px;background:#f2f2f2;border-top:1px solid #d6d6d6;box-sizing:border-box;"></div>
<div style="left:872px;top:283px;width:157px;height:18px;background:#fff;border-top:1px solid #d6d6d6;border-left:1px solid #d6d6d6;box-sizing:border-box;"></div>
<div class="t" style="left:719px;top:285px;height:17px;line-height:17px;letter-spacing:-0.17px;">Packstückart 2</div>
<div style="left:691px;top:301px;width:12px;height:18px;background:#e9e9e9;"></div>
<div style="left:703px;top:301px;width:1px;height:19px;background:#ababab;"></div>
<div style="left:704px;top:301px;width:168px;height:18px;background:#f2f2f2;border-top:1px solid #d6d6d6;box-sizing:border-box;"></div>
<div style="left:872px;top:301px;width:157px;height:18px;background:#fff;border-top:1px solid #d6d6d6;border-left:1px solid #d6d6d6;box-sizing:border-box;"></div>
<div class="t" style="left:719px;top:303px;height:17px;line-height:17px;letter-spacing:-0.20px;">Warenbeschreibung Zoll 2</div>
<div style="left:691px;top:319px;width:12px;height:18px;background:#e9e9e9;"></div>
<div style="left:703px;top:319px;width:1px;height:19px;background:#ababab;"></div>
<div style="left:704px;top:319px;width:168px;height:18px;background:#f2f2f2;border-top:1px solid #d6d6d6;box-sizing:border-box;"></div>
<div style="left:872px;top:319px;width:157px;height:18px;background:#fff;border-top:1px solid #d6d6d6;border-left:1px solid #d6d6d6;box-sizing:border-box;"></div>
<div class="t" style="left:719px;top:321px;height:17px;line-height:17px;letter-spacing:-0.22px;">Zolltarifnummer 2</div>
<div style="left:691px;top:337px;width:12px;height:18px;background:#e9e9e9;"></div>
<div style="left:703px;top:337px;width:1px;height:19px;background:#ababab;"></div>
<div style="left:704px;top:337px;width:168px;height:18px;background:#f2f2f2;border-top:1px solid #d6d6d6;box-sizing:border-box;"></div>
<div style="left:872px;top:337px;width:157px;height:18px;background:#fff;border-top:1px solid #d6d6d6;border-left:1px solid #d6d6d6;box-sizing:border-box;"></div>
<div class="t" style="left:719px;top:339px;height:17px;line-height:17px;letter-spacing:-0.13px;">Gewicht kg / fp 2</div>
<div class="t" style="left:874px;top:338px;width:151px;text-align:right;height:17px;line-height:17px;letter-spacing:-0.14px;">0,00</div>
<div style="left:691px;top:355px;width:12px;height:18px;background:#e9e9e9;"></div>
<div style="left:703px;top:355px;width:1px;height:19px;background:#ababab;"></div>
<div style="left:704px;top:355px;width:168px;height:18px;background:#f2f2f2;border-top:1px solid #d6d6d6;box-sizing:border-box;"></div>
<div style="left:872px;top:355px;width:157px;height:18px;background:#fff;border-top:1px solid #d6d6d6;border-left:1px solid #d6d6d6;box-sizing:border-box;"></div>
<div class="t" style="left:719px;top:357px;height:17px;line-height:17px;letter-spacing:0.05px;">Warenwert 2</div>
<div class="t" style="left:874px;top:356px;width:151px;text-align:right;height:17px;line-height:17px;letter-spacing:-0.14px;">0,00</div>
<div style="left:691px;top:373px;width:12px;height:18px;background:#e9e9e9;"></div>
<div style="left:703px;top:373px;width:1px;height:19px;background:#ababab;"></div>
<div style="left:704px;top:373px;width:168px;height:18px;background:#f2f2f2;border-top:1px solid #d6d6d6;box-sizing:border-box;"></div>
<div style="left:872px;top:373px;width:157px;height:18px;background:#fff;border-top:1px solid #d6d6d6;border-left:1px solid #d6d6d6;box-sizing:border-box;"></div>
<div class="t" style="left:719px;top:375px;height:17px;line-height:17px;letter-spacing:-0.28px;">Verzollungsnummer 2</div>
<div style="left:691px;top:391px;width:12px;height:18px;background:#e9e9e9;"></div>
<div style="left:703px;top:391px;width:1px;height:19px;background:#ababab;"></div>
<div style="left:704px;top:391px;width:168px;height:18px;background:#f2f2f2;border-top:1px solid #d6d6d6;box-sizing:border-box;"></div>
<div style="left:872px;top:391px;width:157px;height:18px;background:#fff;border-top:1px solid #d6d6d6;border-left:1px solid #d6d6d6;box-sizing:border-box;"></div>
<div class="t" style="left:719px;top:393px;height:17px;line-height:17px;letter-spacing:-0.20px;">Vorpapiernummer 2</div>
<div style="left:691px;top:409px;width:12px;height:18px;background:#e9e9e9;"></div>
<div style="left:703px;top:409px;width:1px;height:19px;background:#ababab;"></div>
<div style="left:704px;top:409px;width:168px;height:18px;background:#f2f2f2;border-top:1px solid #d6d6d6;box-sizing:border-box;"></div>
<div style="left:872px;top:409px;width:157px;height:18px;background:#fff;border-top:1px solid #d6d6d6;border-left:1px solid #d6d6d6;box-sizing:border-box;"></div>
<div class="t" style="left:719px;top:411px;height:17px;line-height:17px;letter-spacing:-0.25px;">Positionsnummer der Position...</div>
<div style="left:691px;top:427px;width:12px;height:18px;background:#e9e9e9;"></div>
<div style="left:703px;top:427px;width:1px;height:19px;background:#ababab;"></div>
<div style="left:704px;top:427px;width:168px;height:18px;background:#f2f2f2;border-top:1px solid #d6d6d6;box-sizing:border-box;"></div>
<div style="left:872px;top:427px;width:157px;height:18px;background:#fff;border-top:1px solid #d6d6d6;border-left:1px solid #d6d6d6;box-sizing:border-box;"></div>
<div class="t" style="left:719px;top:429px;height:17px;line-height:17px;transform:scaleX(0.919);transform-origin:0 0;">MRN Nummer 2</div>
<div style="left:691px;top:228px;width:339px;height:20px;border-top:1px solid #ababab;box-sizing:border-box;background:linear-gradient(#f4f4f4,#e3e3e3);"></div>
<div style="left:703px;top:248px;width:327px;height:1px;background:#ababab;"></div>
<div class="t" style="left:707px;top:229px;height:19px;line-height:19px;font-weight:bold;-webkit-text-stroke:0.3px;letter-spacing:0.30px;color:#858585;">Ladungsinhalt 2</div>
<div style="left:1007px;top:231px;width:15px;height:15px;box-sizing:border-box;border:1px solid #a2a2a2;border-radius:2.5px;background:linear-gradient(#ffffff 40%,#e6e6e6);"><svg width="15" height="15" viewBox="0 0 15 15" style="position:absolute;left:-1px;top:-1px"><path d="M4.5 9.0 L7.5 6.0 L10.5 9.0" fill="none" stroke="#585858" stroke-width="1.9"/></svg></div>
<div style="left:691px;top:103px;width:339px;height:343px;box-sizing:border-box;border:solid #a3a3a3;border-width:1px;"></div>
</div>
<div class="g" id="propgrid4">
<div style="left:1031px;top:103px;width:12px;height:18px;background:#e9e9e9;"></div>
<div style="left:1043px;top:103px;width:1px;height:19px;background:#ababab;"></div>
<div style="left:1044px;top:103px;width:168px;height:18px;background:#f2f2f2;border-top:1px solid #d6d6d6;box-sizing:border-box;"></div>
<div style="left:1212px;top:103px;width:157px;height:18px;background:#fff;border-top:1px solid #d6d6d6;border-left:1px solid #d6d6d6;box-sizing:border-box;"></div>
<div class="t" style="left:1059px;top:104px;height:17px;line-height:17px;transform:scaleX(0.916);transform-origin:0 0;">LRN Nummer 2</div>
<div style="left:1031px;top:121px;width:12px;height:18px;background:#e9e9e9;"></div>
<div style="left:1043px;top:121px;width:1px;height:19px;background:#ababab;"></div>
<div style="left:1044px;top:121px;width:168px;height:18px;background:#f2f2f2;border-top:1px solid #d6d6d6;box-sizing:border-box;"></div>
<div style="left:1212px;top:121px;width:157px;height:18px;background:#fff;border-top:1px solid #d6d6d6;border-left:1px solid #d6d6d6;box-sizing:border-box;"></div>
<div class="t" style="left:1059px;top:122px;height:17px;line-height:17px;transform:scaleX(0.945);transform-origin:0 0;">Abfallnummer 2</div>
<div class="t" style="left:1217px;top:121px;height:17px;line-height:17px;letter-spacing:-0.16px;">02</div>
<div style="left:1031px;top:139px;width:12px;height:18px;background:#e9e9e9;"></div>
<div style="left:1043px;top:139px;width:1px;height:19px;background:#ababab;"></div>
<div style="left:1044px;top:139px;width:168px;height:18px;background:#316ac5;border-top:1px solid #316ac5;box-sizing:border-box;"></div>
<div style="left:1212px;top:139px;width:157px;height:18px;background:#fff;border-top:1px solid #d6d6d6;border-left:1px solid #d6d6d6;box-sizing:border-box;"></div>
<div class="t" style="left:1059px;top:140px;height:17px;line-height:17px;letter-spacing:-0.29px;color:#fff;">Abfall Bezeichnung 2</div>
<div class="t" style="left:1217px;top:139px;height:17px;line-height:17px;letter-spacing:-0.14px;">Abfälle aus Landwirtschaft,...</div>
<div style="left:1213px;top:140px;width:155px;height:17px;box-sizing:border-box;border:1px dotted #000;"></div>
<div style="left:1031px;top:175px;width:12px;height:18px;background:#e9e9e9;"></div>
<div style="left:1043px;top:175px;width:1px;height:19px;background:#ababab;"></div>
<div style="left:1044px;top:175px;width:168px;height:18px;background:#f2f2f2;border-top:1px solid #d6d6d6;box-sizing:border-box;"></div>
<div style="left:1212px;top:175px;width:157px;height:18px;background:#fff;border-top:1px solid #d6d6d6;border-left:1px solid #d6d6d6;box-sizing:border-box;"></div>
<div class="t" style="left:1059px;top:177px;height:17px;line-height:17px;letter-spacing:-0.27px;">Empfängeradresse</div>
<div style="left:1031px;top:193px;width:12px;height:18px;background:#e9e9e9;"></div>
<div style="left:1043px;top:193px;width:1px;height:19px;background:#ababab;"></div>
<div style="left:1044px;top:193px;width:168px;height:18px;background:#f2f2f2;border-top:1px solid #d6d6d6;box-sizing:border-box;"></div>
<div style="left:1212px;top:193px;width:157px;height:18px;background:#fff;border-top:1px solid #d6d6d6;border-left:1px solid #d6d6d6;box-sizing:border-box;"></div>
<div class="t" style="left:1059px;top:195px;height:17px;line-height:17px;transform:scaleX(0.934);transform-origin:0 0;">Empfangszollamt</div>
<div style="left:1031px;top:211px;width:12px;height:18px;background:#e9e9e9;"></div>
<div style="left:1043px;top:211px;width:1px;height:19px;background:#ababab;"></div>
<div style="left:1044px;top:211px;width:168px;height:18px;background:#f2f2f2;border-top:1px solid #d6d6d6;box-sizing:border-box;"></div>
<div style="left:1212px;top:211px;width:157px;height:18px;background:#fff;border-top:1px solid #d6d6d6;border-left:1px solid #d6d6d6;box-sizing:border-box;"></div>
<div class="t" style="left:1059px;top:213px;height:17px;line-height:17px;letter-spacing:-0.25px;">Abgangszollamt</div>
<div style="left:1031px;top:229px;width:12px;height:20px;background:#e9e9e9;"></div>
<div style="left:1043px;top:229px;width:1px;height:21px;background:#ababab;"></div>
<div style="left:1044px;top:229px;width:168px;height:20px;background:#f2f2f2;border-top:1px solid #d6d6d6;box-sizing:border-box;"></div>
<div style="left:1212px;top:229px;width:157px;height:20px;background:#fff;border-top:1px solid #d6d6d6;border-left:1px solid #d6d6d6;box-sizing:border-box;"></div>
<div class="t" style="left:1059px;top:231px;height:19px;line-height:19px;letter-spacing:-0.16px;">Herkunftsland</div>
<div style="left:1031px;top:249px;width:12px;height:20px;background:#e9e9e9;"></div>
<div style="left:1043px;top:249px;width:1px;height:21px;background:#ababab;"></div>
<div style="left:1044px;top:249px;width:168px;height:20px;background:#f2f2f2;border-top:1px solid #d6d6d6;box-sizing:border-box;"></div>
<div style="left:1212px;top:249px;width:157px;height:20px;background:#fff;border-top:1px solid #d6d6d6;border-left:1px solid #d6d6d6;box-sizing:border-box;"></div>
<div class="t" style="left:1059px;top:251px;height:19px;line-height:19px;transform:scaleX(0.935);transform-origin:0 0;">Bestimmungsland</div>
<div style="left:1031px;top:269px;width:12px;height:18px;background:#e9e9e9;"></div>
<div style="left:1043px;top:269px;width:1px;height:19px;background:#ababab;"></div>
<div style="left:1044px;top:269px;width:168px;height:18px;background:#f2f2f2;border-top:1px solid #d6d6d6;box-sizing:border-box;"></div>
<div style="left:1212px;top:269px;width:157px;height:18px;background:#fff;border-top:1px solid #d6d6d6;border-left:1px solid #d6d6d6;box-sizing:border-box;"></div>
<div class="t" style="left:1059px;top:270px;height:17px;line-height:17px;letter-spacing:-0.14px;">Versenderadresse</div>
<div style="left:1031px;top:287px;width:12px;height:20px;background:#e9e9e9;"></div>
<div style="left:1043px;top:287px;width:1px;height:21px;background:#ababab;"></div>
<div style="left:1044px;top:287px;width:168px;height:20px;background:#f2f2f2;border-top:1px solid #d6d6d6;box-sizing:border-box;"></div>
<div style="left:1212px;top:287px;width:157px;height:20px;background:#fff;border-top:1px solid #d6d6d6;border-left:1px solid #d6d6d6;box-sizing:border-box;"></div>
<div class="t" style="left:1059px;top:289px;height:19px;line-height:19px;letter-spacing:-0.20px;">T1 Erstellung durch</div>
<div style="left:1031px;top:364px;width:181px;height:18px;background:#f2f2f2;border-top:1px solid #d6d6d6;box-sizing:border-box;"></div>
<div style="left:1212px;top:364px;width:157px;height:18px;background:#fff;border-top:1px solid #d6d6d6;border-left:1px solid #d6d6d6;box-sizing:border-box;"></div>
<div class="t" style="left:1045px;top:366px;height:17px;line-height:17px;letter-spacing:-0.17px;">Als weitere Positionen hinzufügen</div>
<div style="left:1285px;top:368px;width:10px;height:10px;border:1px solid #4792e8;border-radius:2px;background:linear-gradient(#e6f2ff 0%,#c4e1fd 54%,#9bd0fb 60%,#a8d6fc 84%,#d8ecff 100%);box-shadow:inset 0 0 0 1px rgba(255,255,255,0.55);"></div>
<div style="left:1031px;top:382px;width:181px;height:18px;background:#f2f2f2;border-top:1px solid #d6d6d6;box-sizing:border-box;"></div>
<div style="left:1212px;top:382px;width:157px;height:18px;background:#fff;border-top:1px solid #d6d6d6;border-left:1px solid #d6d6d6;box-sizing:border-box;"></div>
<div class="t" style="left:1045px;top:384px;height:17px;line-height:17px;letter-spacing:0.05px;">Auftrag erstellt</div>
<div style="left:1285px;top:386px;width:10px;height:10px;border:1px solid #4792e8;border-radius:2px;background:linear-gradient(#e6f2ff 0%,#c4e1fd 54%,#9bd0fb 60%,#a8d6fc 84%,#d8ecff 100%);box-shadow:inset 0 0 0 1px rgba(255,255,255,0.55);"></div>
<div style="left:1031px;top:400px;width:181px;height:18px;background:#f2f2f2;border-top:1px solid #d6d6d6;box-sizing:border-box;"></div>
<div style="left:1212px;top:400px;width:157px;height:18px;background:#fff;border-top:1px solid #d6d6d6;border-left:1px solid #d6d6d6;box-sizing:border-box;"></div>
<div class="t" style="left:1045px;top:402px;height:17px;line-height:17px;letter-spacing:-0.27px;">Frei Häkchen 1</div>
<div style="left:1285px;top:404px;width:10px;height:10px;border:1px solid #4792e8;border-radius:2px;background:linear-gradient(#e6f2ff 0%,#c4e1fd 54%,#9bd0fb 60%,#a8d6fc 84%,#d8ecff 100%);box-shadow:inset 0 0 0 1px rgba(255,255,255,0.55);"></div>
<div style="left:1031px;top:418px;width:181px;height:18px;background:#f2f2f2;border-top:1px solid #d6d6d6;box-sizing:border-box;"></div>
<div style="left:1212px;top:418px;width:157px;height:18px;background:#fff;border-top:1px solid #d6d6d6;border-left:1px solid #d6d6d6;box-sizing:border-box;"></div>
<div class="t" style="left:1045px;top:420px;height:17px;line-height:17px;letter-spacing:-0.27px;">Frei Häkchen 2</div>
<div style="left:1285px;top:422px;width:10px;height:10px;border:1px solid #4792e8;border-radius:2px;background:linear-gradient(#e6f2ff 0%,#c4e1fd 54%,#9bd0fb 60%,#a8d6fc 84%,#d8ecff 100%);box-shadow:inset 0 0 0 1px rgba(255,255,255,0.55);"></div>
<div style="left:1031px;top:436px;width:181px;height:18px;background:#f2f2f2;border-top:1px solid #d6d6d6;box-sizing:border-box;"></div>
<div style="left:1212px;top:436px;width:157px;height:18px;background:#fff;border-top:1px solid #d6d6d6;border-left:1px solid #d6d6d6;box-sizing:border-box;"></div>
<div class="t" style="left:1045px;top:438px;height:17px;line-height:17px;letter-spacing:-0.27px;">Frei Häkchen 3</div>
<div style="left:1285px;top:440px;width:10px;height:10px;border:1px solid #4792e8;border-radius:2px;background:linear-gradient(#e6f2ff 0%,#c4e1fd 54%,#9bd0fb 60%,#a8d6fc 84%,#d8ecff 100%);box-shadow:inset 0 0 0 1px rgba(255,255,255,0.55);"></div>
<div style="left:1031px;top:157px;width:339px;height:18px;border-top:1px solid #ababab;box-sizing:border-box;background:linear-gradient(#f4f4f4,#e3e3e3);"></div>
<div style="left:1043px;top:175px;width:327px;height:1px;background:#ababab;"></div>
<div class="t" style="left:1047px;top:158px;height:17px;line-height:17px;font-weight:bold;-webkit-text-stroke:0.3px;letter-spacing:-0.23px;color:#858585;">NCTS</div>
<div style="left:1347px;top:159px;width:15px;height:14px;box-sizing:border-box;border:1px solid #a2a2a2;border-radius:2.5px;background:linear-gradient(#ffffff 40%,#e6e6e6);"><svg width="15" height="15" viewBox="0 0 15 15" style="position:absolute;left:-1px;top:-1px"><path d="M4.5 9.0 L7.5 6.0 L10.5 9.0" fill="none" stroke="#585858" stroke-width="1.9"/></svg></div>
<div style="left:1031px;top:307px;width:339px;height:19px;border-top:1px solid #ababab;box-sizing:border-box;background:linear-gradient(#f4f4f4,#e3e3e3);"></div>
<div class="t" style="left:1047px;top:308px;height:18px;line-height:18px;font-weight:bold;-webkit-text-stroke:0.3px;letter-spacing:0.22px;color:#858585;">Abrechnung</div>
<div style="left:1347px;top:309px;width:15px;height:15px;box-sizing:border-box;border:1px solid #a2a2a2;border-radius:2.5px;background:linear-gradient(#ffffff 40%,#e6e6e6);"><svg width="15" height="15" viewBox="0 0 15 15" style="position:absolute;left:-1px;top:-1px"><path d="M4.5 6.0 L7.5 9.0 L10.5 6.0" fill="none" stroke="#585858" stroke-width="1.9"/></svg></div>
<div style="left:1031px;top:326px;width:339px;height:19px;border-top:1px solid #ababab;box-sizing:border-box;background:linear-gradient(#f4f4f4,#e3e3e3);"></div>
<div class="t" style="left:1047px;top:327px;height:18px;line-height:18px;font-weight:bold;-webkit-text-stroke:0.3px;letter-spacing:0.74px;color:#858585;">IMO</div>
<div style="left:1347px;top:328px;width:15px;height:15px;box-sizing:border-box;border:1px solid #a2a2a2;border-radius:2.5px;background:linear-gradient(#ffffff 40%,#e6e6e6);"><svg width="15" height="15" viewBox="0 0 15 15" style="position:absolute;left:-1px;top:-1px"><path d="M4.5 6.0 L7.5 9.0 L10.5 6.0" fill="none" stroke="#585858" stroke-width="1.9"/></svg></div>
<div style="left:1031px;top:345px;width:339px;height:19px;border-top:1px solid #ababab;box-sizing:border-box;background:linear-gradient(#f4f4f4,#e3e3e3);"></div>
<div style="left:1031px;top:364px;width:339px;height:1px;background:#ababab;"></div>
<div class="t" style="left:1047px;top:346px;height:18px;line-height:18px;font-weight:bold;-webkit-text-stroke:0.3px;letter-spacing:0.28px;color:#858585;">Reefer</div>
<div style="left:1347px;top:347px;width:15px;height:15px;box-sizing:border-box;border:1px solid #a2a2a2;border-radius:2.5px;background:linear-gradient(#ffffff 40%,#e6e6e6);"><svg width="15" height="15" viewBox="0 0 15 15" style="position:absolute;left:-1px;top:-1px"><path d="M4.5 6.0 L7.5 9.0 L10.5 6.0" fill="none" stroke="#585858" stroke-width="1.9"/></svg></div>
<div style="left:1031px;top:103px;width:339px;height:352px;box-sizing:border-box;border:solid #a3a3a3;border-width:1px;"></div>
</div>
<div class="g" id="propgrid5">
<div style="left:1371px;top:103px;width:182px;height:18px;background:#f2f2f2;border-top:1px solid #d6d6d6;box-sizing:border-box;"></div>
<div style="left:1553px;top:103px;width:7px;height:18px;background:#fff;border-top:1px solid #d6d6d6;border-left:1px solid #d6d6d6;box-sizing:border-box;"></div>
<div class="t" style="left:1385px;top:104px;height:17px;line-height:17px;letter-spacing:-0.20px;">Referenz 1</div>
<div style="left:1371px;top:121px;width:182px;height:17px;background:#f2f2f2;border-top:1px solid #d6d6d6;box-sizing:border-box;"></div>
<div style="left:1553px;top:121px;width:7px;height:17px;background:#fff;border-top:1px solid #d6d6d6;border-left:1px solid #d6d6d6;box-sizing:border-box;"></div>
<div class="t" style="left:1385px;top:122px;height:16px;line-height:16px;letter-spacing:-0.20px;">Referenz 2</div>
<div style="left:1371px;top:138px;width:182px;height:18px;background:#f2f2f2;border-top:1px solid #d6d6d6;box-sizing:border-box;"></div>
<div style="left:1553px;top:138px;width:7px;height:18px;background:#fff;border-top:1px solid #d6d6d6;border-left:1px solid #d6d6d6;box-sizing:border-box;"></div>
<div class="t" style="left:1385px;top:140px;height:17px;line-height:17px;letter-spacing:-0.01px;">Verantwortlicher Nutzer</div>
<div style="left:1371px;top:156px;width:182px;height:18px;background:#f2f2f2;border-top:1px solid #d6d6d6;box-sizing:border-box;"></div>
<div style="left:1553px;top:156px;width:7px;height:18px;background:#fff;border-top:1px solid #d6d6d6;border-left:1px solid #d6d6d6;box-sizing:border-box;"></div>
<div class="t" style="left:1385px;top:158px;height:17px;line-height:17px;letter-spacing:-0.10px;">Auftragskomplexität</div>
<div style="left:1371px;top:103px;width:190px;height:72px;box-sizing:border-box;border:solid #a3a3a3;border-width:1px 0 1px 1px;"></div>
</div>
<div class="g" id="highlights">
<div style="left:352px;top:302px;width:340px;height:28px;box-sizing:border-box;border:5px solid #e87a27;"></div>
<div style="left:700px;top:191px;width:334px;height:41px;box-sizing:border-box;border:5px solid #e87a27;"></div>
<div style="left:700px;top:226px;width:334px;height:25px;box-sizing:border-box;border:5px solid #e87a27;"></div>
<div style="left:1042px;top:116px;width:330px;height:44px;box-sizing:border-box;border:5px solid #e87a27;"></div>
</div>
<div class="g" id="splitter">
<div style="left:5px;top:471px;width:1548px;height:1px;background:#fff;"></div>
<div style="left:5px;top:472px;width:1548px;height:6px;box-sizing:border-box;border-top:1px solid #6fb2ee;border-bottom:1px solid #5eaeee;border-left:1px solid #6fb2ee;border-radius:3px 0 0 3px;background:linear-gradient(#dcecfe 0%,#d4e8fe 45%,#9ad1fc 55%,#a4d6fc 100%);"></div>
<div style="left:1267px;top:473px;width:16px;height:4px;box-sizing:border-box;border-left:1px solid #7dbcf2;border-right:1px solid #7dbcf2;"></div>
<div style="left:5px;top:478px;width:1548px;height:1px;background:#fff;"></div>
</div>
<div class="g" id="toolbar-bottom">
<div style="left:5px;top:479px;width:1548px;height:26px;box-sizing:border-box;border-bottom:1px solid #bdbdbd;background:linear-gradient(#f6f6f6 0%,#eeeeee 45%,#e1e1e1 100%);"></div>
<div class="t" style="left:12px;top:479px;height:24px;line-height:24px;font-size:12px;color:#9a9a9a;">Höher</div>
<div class="t" style="left:53px;top:479px;height:24px;line-height:24px;font-size:12px;color:#9a9a9a;">Tiefer</div>
<div style="left:5px;top:505px;width:1548px;height:1px;background:#fafafa;"></div>
<div style="left:5px;top:506px;width:1548px;height:26px;box-sizing:border-box;border-bottom:1px solid #bdbdbd;background:linear-gradient(#f6f6f6 0%,#eeeeee 45%,#e1e1e1 100%);"></div>
<div style="left:11px;top:508px;width:100px;height:20px;box-sizing:border-box;border:1px solid #a6a6a6;background:#fff;"></div>
<div style="left:94px;top:510px;width:15px;height:16px;box-sizing:border-box;border:1px solid #6f9fd6;border-radius:2px;background:linear-gradient(#f4f9ff 0%,#d5e7fb 45%,#a9cbf3 55%,#c4dcf8 100%);"><svg width="15" height="16" viewBox="0 0 15 16" style="position:absolute;left:-1px;top:-1px"><path d="M4.9 6.7 L7.7 9.5 L10.5 6.7" fill="none" stroke="#1f5fc6" stroke-width="1.9"/></svg></div>
<div class="t" style="left:119px;top:506px;height:25px;line-height:25px;font-size:12px;color:#9a9a9a;letter-spacing:-0.15px;">Vorlage anwenden</div>
</div>
<div class="g" id="waypoint-grid">
<div style="left:5px;top:532px;width:1548px;height:113px;background:#fff;"></div>
<div style="left:5px;top:478px;width:1px;height:167px;background:#b4b4b4;"></div>
<div style="left:7px;top:534px;width:1546px;height:1px;background:#a0a0a0;"></div>
<div style="left:7px;top:534px;width:1px;height:107px;background:#a9a9a9;"></div>
<div style="left:9px;top:535px;width:13px;height:19px;box-sizing:border-box;border-left:1px solid #fff;border-right:1px solid #b5b5b5;border-bottom:1px solid #a9a9a9;background:linear-gradient(#fcfcfc 0%,#f3f3f3 45%,#e9e9e9 60%,#e4e4e4 100%);"></div>
<div style="left:22px;top:535px;width:129px;height:19px;box-sizing:border-box;border-left:1px solid #fff;border-right:1px solid #b5b5b5;border-bottom:1px solid #a9a9a9;background:linear-gradient(#fcfcfc 0%,#f3f3f3 45%,#e9e9e9 60%,#e4e4e4 100%);"></div>
<div class="t" style="left:25px;top:534px;height:18px;line-height:18px;letter-spacing:-0.04px;">Wegpunkttyp</div>
<div style="left:151px;top:535px;width:22px;height:19px;box-sizing:border-box;border-left:1px solid #fff;border-right:1px solid #b5b5b5;border-bottom:1px solid #a9a9a9;background:linear-gradient(#fcfcfc 0%,#f3f3f3 45%,#e9e9e9 60%,#e4e4e4 100%);"></div>
<div class="t" style="left:154px;top:534px;height:18px;line-height:18px;font-weight:bold;-webkit-text-stroke:0.3px;letter-spacing:0.92px;">...</div>
<div style="left:173px;top:535px;width:46px;height:19px;box-sizing:border-box;border-left:1px solid #fff;border-right:1px solid #b5b5b5;border-bottom:1px solid #a9a9a9;background:linear-gradient(#fcfcfc 0%,#f3f3f3 45%,#e9e9e9 60%,#e4e4e4 100%);"></div>
<div class="t" style="left:176px;top:534px;height:18px;line-height:18px;letter-spacing:-0.13px;">Verke...</div>
<div style="left:219px;top:535px;width:96px;height:19px;box-sizing:border-box;border-left:1px solid #fff;border-right:1px solid #b5b5b5;border-bottom:1px solid #a9a9a9;background:linear-gradient(#fcfcfc 0%,#f3f3f3 45%,#e9e9e9 60%,#e4e4e4 100%);"></div>
<div class="t" style="left:222px;top:534px;height:18px;line-height:18px;letter-spacing:-0.16px;">ab</div>
<div style="left:315px;top:535px;width:113px;height:19px;box-sizing:border-box;border-left:1px solid #fff;border-right:1px solid #b5b5b5;border-bottom:1px solid #a9a9a9;background:linear-gradient(#fcfcfc 0%,#f3f3f3 45%,#e9e9e9 60%,#e4e4e4 100%);"></div>
<div class="t" style="left:318px;top:534px;height:18px;line-height:18px;transform:scaleX(0.923);transform-origin:0 0;">bis</div>
<div style="left:428px;top:535px;width:104px;height:19px;box-sizing:border-box;border-left:1px solid #fff;border-right:1px solid #b5b5b5;border-bottom:1px solid #a9a9a9;background:linear-gradient(#fcfcfc 0%,#f3f3f3 45%,#e9e9e9 60%,#e4e4e4 100%);"></div>
<div class="t" style="left:431px;top:534px;height:18px;line-height:18px;letter-spacing:-0.22px;">Matchcode</div>
<div style="left:532px;top:535px;width:189px;height:19px;box-sizing:border-box;border-left:1px solid #fff;border-right:1px solid #b5b5b5;border-bottom:1px solid #a9a9a9;background:linear-gradient(#fcfcfc 0%,#f3f3f3 45%,#e9e9e9 60%,#e4e4e4 100%);"></div>
<div class="t" style="left:535px;top:534px;height:18px;line-height:18px;letter-spacing:-0.29px;">Adressname</div>
<div style="left:721px;top:535px;width:185px;height:19px;box-sizing:border-box;border-left:1px solid #fff;border-right:1px solid #b5b5b5;border-bottom:1px solid #a9a9a9;background:linear-gradient(#fcfcfc 0%,#f3f3f3 45%,#e9e9e9 60%,#e4e4e4 100%);"></div>
<div class="t" style="left:724px;top:534px;height:18px;line-height:18px;letter-spacing:-0.18px;">Straße</div>
<div style="left:906px;top:535px;width:71px;height:19px;box-sizing:border-box;border-left:1px solid #fff;border-right:1px solid #b5b5b5;border-bottom:1px solid #a9a9a9;background:linear-gradient(#fcfcfc 0%,#f3f3f3 45%,#e9e9e9 60%,#e4e4e4 100%);"></div>
<div class="t" style="left:909px;top:534px;height:18px;line-height:18px;transform:scaleX(0.840);transform-origin:0 0;">PLZ</div>
<div style="left:977px;top:535px;width:125px;height:19px;box-sizing:border-box;border-left:1px solid #fff;border-right:1px solid #b5b5b5;border-bottom:1px solid #a9a9a9;background:linear-gradient(#fcfcfc 0%,#f3f3f3 45%,#e9e9e9 60%,#e4e4e4 100%);"></div>
<div class="t" style="left:980px;top:534px;height:18px;line-height:18px;letter-spacing:0.24px;">Ort</div>
<div style="left:1102px;top:535px;width:98px;height:19px;box-sizing:border-box;border-left:1px solid #fff;border-right:1px solid #b5b5b5;border-bottom:1px solid #a9a9a9;background:linear-gradient(#fcfcfc 0%,#f3f3f3 45%,#e9e9e9 60%,#e4e4e4 100%);"></div>
<div class="t" style="left:1105px;top:534px;height:18px;line-height:18px;transform:scaleX(0.933);transform-origin:0 0;">Land</div>
<div style="left:1200px;top:535px;width:125px;height:19px;box-sizing:border-box;border-left:1px solid #fff;border-right:1px solid #b5b5b5;border-bottom:1px solid #a9a9a9;background:linear-gradient(#fcfcfc 0%,#f3f3f3 45%,#e9e9e9 60%,#e4e4e4 100%);"></div>
<div class="t" style="left:1203px;top:534px;height:18px;line-height:18px;letter-spacing:-0.17px;">Freistellung</div>
<div style="left:1325px;top:535px;width:117px;height:19px;box-sizing:border-box;border-left:1px solid #fff;border-right:1px solid #b5b5b5;border-bottom:1px solid #a9a9a9;background:linear-gradient(#fcfcfc 0%,#f3f3f3 45%,#e9e9e9 60%,#e4e4e4 100%);"></div>
<div class="t" style="left:1328px;top:534px;height:18px;line-height:18px;transform:scaleX(0.906);transform-origin:0 0;">Schiff</div>
<div style="left:1442px;top:535px;width:110px;height:19px;box-sizing:border-box;border-left:1px solid #fff;border-right:1px solid #b5b5b5;border-bottom:1px solid #a9a9a9;background:linear-gradient(#fcfcfc 0%,#f3f3f3 45%,#e9e9e9 60%,#e4e4e4 100%);"></div>
<div class="t" style="left:1445px;top:534px;height:18px;line-height:18px;letter-spacing:-0.22px;">Hafen / Terminal</div>
<div style="left:1551px;top:534px;width:2px;height:20px;background:#e8e8e8;"></div>
<div style="left:8px;top:554px;width:1545px;height:21px;background:#fdfde6;box-sizing:border-box;border-bottom:1px solid #b9b9b9;"></div>
<div style="left:8px;top:554px;width:14px;height:20px;background:#f0f0f0;box-sizing:border-box;border-right:1px solid #b5b5b5;"></div>
<svg style="position:absolute;left:9px;top:557px" width="12" height="12" viewBox="0 0 12 12"><path d="M2.5 2.5 H8.5 V4 L6.5 6.5 V9.5 H4.5 V6.5 L2.5 4 Z" fill="#f8f8f8" stroke="#6a6a6a" stroke-width="1"/></svg>
<div style="left:150px;top:554px;width:1px;height:20px;background:#dcdcd0;"></div>
<div style="left:31px;top:562px;width:9px;height:1px;background:#222;"></div>
<div style="left:31px;top:565px;width:9px;height:1px;background:#222;"></div>
<div style="left:172px;top:554px;width:1px;height:20px;background:#dcdcd0;"></div>
<div style="left:218px;top:554px;width:1px;height:20px;background:#dcdcd0;"></div>
<div style="left:182px;top:562px;width:9px;height:1px;background:#222;"></div>
<div style="left:182px;top:565px;width:9px;height:1px;background:#222;"></div>
<div style="left:314px;top:554px;width:1px;height:20px;background:#dcdcd0;"></div>
<div style="left:228px;top:562px;width:9px;height:1px;background:#222;"></div>
<div style="left:228px;top:565px;width:9px;height:1px;background:#222;"></div>
<div style="left:427px;top:554px;width:1px;height:20px;background:#dcdcd0;"></div>
<div style="left:324px;top:562px;width:9px;height:1px;background:#222;"></div>
<div style="left:324px;top:565px;width:9px;height:1px;background:#222;"></div>
<div style="left:531px;top:554px;width:1px;height:20px;background:#dcdcd0;"></div>
<div style="left:437px;top:562px;width:9px;height:1px;background:#222;"></div>
<div style="left:437px;top:565px;width:9px;height:1px;background:#222;"></div>
<div style="left:720px;top:554px;width:1px;height:20px;background:#dcdcd0;"></div>
<div style="left:531px;top:554px;width:24px;height:20px;"><div class="t" style="left:7px;top:8px;font-size:7px;line-height:7px;font-weight:bold;font-family:'Liberation Mono',monospace;color:#111;transform:scaleX(0.85);transform-origin:0 0;">A</div><div style="left:11px;top:5px;width:7px;height:11px;background:#4ba988;border-radius:1px;"></div><div class="t" style="left:12.7px;top:8px;font-size:7px;line-height:7px;font-weight:bold;font-family:'Liberation Mono',monospace;color:#d4f0e3;transform:scaleX(0.85);transform-origin:0 0;">B</div><div class="t" style="left:19px;top:8px;font-size:7px;line-height:7px;font-weight:bold;font-family:'Liberation Mono',monospace;color:#111;transform:scaleX(0.85);transform-origin:0 0;">C</div></div>
<div style="left:905px;top:554px;width:1px;height:20px;background:#dcdcd0;"></div>
<div style="left:720px;top:554px;width:24px;height:20px;"><div class="t" style="left:7px;top:8px;font-size:7px;line-height:7px;font-weight:bold;font-family:'Liberation Mono',monospace;color:#111;transform:scaleX(0.85);transform-origin:0 0;">A</div><div style="left:11px;top:5px;width:7px;height:11px;background:#4ba988;border-radius:1px;"></div><div class="t" style="left:12.7px;top:8px;font-size:7px;line-height:7px;font-weight:bold;font-family:'Liberation Mono',monospace;color:#d4f0e3;transform:scaleX(0.85);transform-origin:0 0;">B</div><div class="t" style="left:19px;top:8px;font-size:7px;line-height:7px;font-weight:bold;font-family:'Liberation Mono',monospace;color:#111;transform:scaleX(0.85);transform-origin:0 0;">C</div></div>
<div style="left:976px;top:554px;width:1px;height:20px;background:#dcdcd0;"></div>
<div style="left:905px;top:554px;width:24px;height:20px;"><div class="t" style="left:7px;top:8px;font-size:7px;line-height:7px;font-weight:bold;font-family:'Liberation Mono',monospace;color:#111;transform:scaleX(0.85);transform-origin:0 0;">A</div><div style="left:11px;top:5px;width:7px;height:11px;background:#4ba988;border-radius:1px;"></div><div class="t" style="left:12.7px;top:8px;font-size:7px;line-height:7px;font-weight:bold;font-family:'Liberation Mono',monospace;color:#d4f0e3;transform:scaleX(0.85);transform-origin:0 0;">B</div><div class="t" style="left:19px;top:8px;font-size:7px;line-height:7px;font-weight:bold;font-family:'Liberation Mono',monospace;color:#111;transform:scaleX(0.85);transform-origin:0 0;">C</div></div>
<div style="left:1101px;top:554px;width:1px;height:20px;background:#dcdcd0;"></div>
<div style="left:976px;top:554px;width:24px;height:20px;"><div class="t" style="left:7px;top:8px;font-size:7px;line-height:7px;font-weight:bold;font-family:'Liberation Mono',monospace;color:#111;transform:scaleX(0.85);transform-origin:0 0;">A</div><div style="left:11px;top:5px;width:7px;height:11px;background:#4ba988;border-radius:1px;"></div><div class="t" style="left:12.7px;top:8px;font-size:7px;line-height:7px;font-weight:bold;font-family:'Liberation Mono',monospace;color:#d4f0e3;transform:scaleX(0.85);transform-origin:0 0;">B</div><div class="t" style="left:19px;top:8px;font-size:7px;line-height:7px;font-weight:bold;font-family:'Liberation Mono',monospace;color:#111;transform:scaleX(0.85);transform-origin:0 0;">C</div></div>
<div style="left:1199px;top:554px;width:1px;height:20px;background:#dcdcd0;"></div>
<div style="left:1111px;top:562px;width:9px;height:1px;background:#222;"></div>
<div style="left:1111px;top:565px;width:9px;height:1px;background:#222;"></div>
<div style="left:1324px;top:554px;width:1px;height:20px;background:#dcdcd0;"></div>
<div style="left:1199px;top:554px;width:24px;height:20px;"><div class="t" style="left:7px;top:8px;font-size:7px;line-height:7px;font-weight:bold;font-family:'Liberation Mono',monospace;color:#111;transform:scaleX(0.85);transform-origin:0 0;">A</div><div style="left:11px;top:5px;width:7px;height:11px;background:#4ba988;border-radius:1px;"></div><div class="t" style="left:12.7px;top:8px;font-size:7px;line-height:7px;font-weight:bold;font-family:'Liberation Mono',monospace;color:#d4f0e3;transform:scaleX(0.85);transform-origin:0 0;">B</div><div class="t" style="left:19px;top:8px;font-size:7px;line-height:7px;font-weight:bold;font-family:'Liberation Mono',monospace;color:#111;transform:scaleX(0.85);transform-origin:0 0;">C</div></div>
<div style="left:1441px;top:554px;width:1px;height:20px;background:#dcdcd0;"></div>
<div style="left:1334px;top:562px;width:9px;height:1px;background:#222;"></div>
<div style="left:1334px;top:565px;width:9px;height:1px;background:#222;"></div>
<div style="left:1551px;top:554px;width:1px;height:20px;background:#dcdcd0;"></div>
<div style="left:1451px;top:562px;width:9px;height:1px;background:#222;"></div>
<div style="left:1451px;top:565px;width:9px;height:1px;background:#222;"></div>
<div style="left:8px;top:575px;width:1545px;height:3px;background:#e9e9e9;"></div>
<div style="left:8px;top:577px;width:1545px;height:1px;background:#c4c4c4;"></div>
<div style="left:8px;top:578px;width:1545px;height:21px;background:#fbfbfb;box-sizing:border-box;border-bottom:1px solid #e0e0e0;"></div>
<div style="left:8px;top:578px;width:14px;height:21px;box-sizing:border-box;border-right:1px solid #b0b0b0;border-bottom:1px solid #b0b0b0;border-top:1px solid #fff;border-left:1px solid #fff;background:linear-gradient(#f6f6f6,#e2e2e2);"></div>
<div style="left:150px;top:578px;width:1px;height:20px;background:#e0e0e0;"></div>
<div class="t" style="left:25px;top:578px;height:20px;line-height:20px;letter-spacing:-0.30px;">Aufnahme</div>
<div style="left:172px;top:578px;width:1px;height:20px;background:#e0e0e0;"></div>
<div class="t" style="left:154px;top:578px;height:20px;line-height:20px;transform:scaleX(0.814);transform-origin:0 0;">B</div>
<div style="left:218px;top:578px;width:1px;height:20px;background:#e0e0e0;"></div>
<div class="t" style="left:176px;top:578px;height:20px;line-height:20px;transform:scaleX(0.880);transform-origin:0 0;">LKW</div>
<div style="left:314px;top:578px;width:1px;height:20px;background:#e0e0e0;"></div>
<div style="left:427px;top:578px;width:1px;height:20px;background:#e0e0e0;"></div>
<div style="left:531px;top:578px;width:1px;height:20px;background:#e0e0e0;"></div>
<div class="t" style="left:431px;top:578px;height:20px;line-height:20px;transform:scaleX(0.886);transform-origin:0 0;">CTA HAMBURG</div>
<div style="left:720px;top:578px;width:1px;height:20px;background:#e0e0e0;"></div>
<div class="t" style="left:535px;top:578px;height:20px;line-height:20px;letter-spacing:-0.21px;">HHLA Container Terminal Altenwerd...</div>
<div style="left:905px;top:578px;width:1px;height:20px;background:#e0e0e0;"></div>
<div class="t" style="left:724px;top:578px;height:20px;line-height:20px;transform:scaleX(0.916);transform-origin:0 0;">Am Ballinkai 1</div>
<div style="left:976px;top:578px;width:1px;height:20px;background:#e0e0e0;"></div>
<div class="t" style="left:909px;top:578px;height:20px;line-height:20px;letter-spacing:-0.16px;">21129</div>
<div style="left:1101px;top:578px;width:1px;height:20px;background:#e0e0e0;"></div>
<div class="t" style="left:980px;top:578px;height:20px;line-height:20px;transform:scaleX(0.949);transform-origin:0 0;">Hamburg</div>
<div style="left:1199px;top:578px;width:1px;height:20px;background:#e0e0e0;"></div>
<div class="t" style="left:1105px;top:578px;height:20px;line-height:20px;letter-spacing:-0.22px;">Deutschland</div>
<div style="left:1324px;top:578px;width:1px;height:20px;background:#e0e0e0;"></div>
<div style="left:1441px;top:578px;width:1px;height:20px;background:#e0e0e0;"></div>
<div style="left:1551px;top:578px;width:1px;height:20px;background:#e0e0e0;"></div>
<div style="left:8px;top:599px;width:1545px;height:21px;background:#fbfbfb;box-sizing:border-box;border-bottom:1px solid #e0e0e0;"></div>
<div style="left:8px;top:599px;width:14px;height:21px;box-sizing:border-box;border-right:1px solid #b0b0b0;border-bottom:1px solid #b0b0b0;border-top:1px solid #fff;border-left:1px solid #fff;background:linear-gradient(#f6f6f6,#e2e2e2);"></div>
<div style="left:150px;top:599px;width:1px;height:20px;background:#e0e0e0;"></div>
<div class="t" style="left:25px;top:599px;height:20px;line-height:20px;letter-spacing:-0.28px;">Gestellung</div>
<div style="left:172px;top:599px;width:1px;height:20px;background:#e0e0e0;"></div>
<div class="t" style="left:154px;top:599px;height:20px;line-height:20px;transform:scaleX(0.814);transform-origin:0 0;">E</div>
<div style="left:218px;top:599px;width:1px;height:20px;background:#e0e0e0;"></div>
<div class="t" style="left:176px;top:599px;height:20px;line-height:20px;transform:scaleX(0.880);transform-origin:0 0;">LKW</div>
<div style="left:314px;top:599px;width:1px;height:20px;background:#e0e0e0;"></div>
<div style="left:427px;top:599px;width:1px;height:20px;background:#e0e0e0;"></div>
<div style="left:531px;top:599px;width:1px;height:20px;background:#e0e0e0;"></div>
<div class="t" style="left:431px;top:599px;height:20px;line-height:20px;transform:scaleX(0.888);transform-origin:0 0;">CARGO SUPPORT...</div>
<div style="left:720px;top:599px;width:1px;height:20px;background:#e0e0e0;"></div>
<div class="t" style="left:535px;top:599px;height:20px;line-height:20px;transform:scaleX(0.940);transform-origin:0 0;">cargo support GmbH &amp; Co. KG</div>
<div style="left:905px;top:599px;width:1px;height:20px;background:#e0e0e0;"></div>
<div class="t" style="left:724px;top:599px;height:20px;line-height:20px;letter-spacing:0.02px;">Trettaustraße 32</div>
<div style="left:976px;top:599px;width:1px;height:20px;background:#e0e0e0;"></div>
<div class="t" style="left:909px;top:599px;height:20px;line-height:20px;letter-spacing:-0.16px;">21107</div>
<div style="left:1101px;top:599px;width:1px;height:20px;background:#e0e0e0;"></div>
<div class="t" style="left:980px;top:599px;height:20px;line-height:20px;transform:scaleX(0.949);transform-origin:0 0;">Hamburg</div>
<div style="left:1199px;top:599px;width:1px;height:20px;background:#e0e0e0;"></div>
<div class="t" style="left:1105px;top:599px;height:20px;line-height:20px;letter-spacing:-0.22px;">Deutschland</div>
<div style="left:1324px;top:599px;width:1px;height:20px;background:#e0e0e0;"></div>
<div style="left:1441px;top:599px;width:1px;height:20px;background:#e0e0e0;"></div>
<div style="left:1551px;top:599px;width:1px;height:20px;background:#e0e0e0;"></div>
<div style="left:8px;top:620px;width:1545px;height:21px;background:#316ac5;box-sizing:border-box;border-bottom:1px solid #316ac5;"></div>
<div style="left:8px;top:620px;width:14px;height:21px;box-sizing:border-box;border-right:1px solid #b0b0b0;border-bottom:1px solid #b0b0b0;border-top:1px solid #fff;border-left:1px solid #fff;background:#fff;"></div>
<div style="left:150px;top:620px;width:1px;height:20px;background:#dfe7f5;"></div>
<div class="t" style="left:25px;top:620px;height:20px;line-height:20px;transform:scaleX(0.945);transform-origin:0 0;color:#fff;">Rückgabe</div>
<div style="left:172px;top:620px;width:1px;height:20px;background:#dfe7f5;"></div>
<div class="t" style="left:154px;top:620px;height:20px;line-height:20px;transform:scaleX(0.814);transform-origin:0 0;color:#fff;">E</div>
<div style="left:218px;top:620px;width:1px;height:20px;background:#dfe7f5;"></div>
<div class="t" style="left:176px;top:620px;height:20px;line-height:20px;transform:scaleX(0.880);transform-origin:0 0;color:#fff;">LKW</div>
<div style="left:314px;top:620px;width:1px;height:20px;background:#dfe7f5;"></div>
<div style="left:427px;top:620px;width:1px;height:20px;background:#dfe7f5;"></div>
<div style="left:531px;top:620px;width:1px;height:20px;background:#dfe7f5;"></div>
<div class="t" style="left:431px;top:620px;height:20px;line-height:20px;transform:scaleX(0.881);transform-origin:0 0;color:#fff;">CTT HAMBURG</div>
<div style="left:720px;top:620px;width:1px;height:20px;background:#dfe7f5;"></div>
<div class="t" style="left:535px;top:620px;height:20px;line-height:20px;letter-spacing:-0.25px;color:#fff;">HHLA Container Terminal Tollerort G...</div>
<div style="left:905px;top:620px;width:1px;height:20px;background:#dfe7f5;"></div>
<div class="t" style="left:724px;top:620px;height:20px;line-height:20px;letter-spacing:-0.26px;color:#fff;">Am Vulkanhafen 30</div>
<div style="left:976px;top:620px;width:1px;height:20px;background:#dfe7f5;"></div>
<div class="t" style="left:909px;top:620px;height:20px;line-height:20px;letter-spacing:-0.16px;color:#fff;">20457</div>
<div style="left:1101px;top:620px;width:1px;height:20px;background:#dfe7f5;"></div>
<div class="t" style="left:980px;top:620px;height:20px;line-height:20px;transform:scaleX(0.949);transform-origin:0 0;color:#fff;">Hamburg</div>
<div style="left:1199px;top:620px;width:1px;height:20px;background:#dfe7f5;"></div>
<div class="t" style="left:1105px;top:620px;height:20px;line-height:20px;letter-spacing:-0.22px;color:#fff;">Deutschland</div>
<div style="left:1324px;top:620px;width:1px;height:20px;background:#dfe7f5;"></div>
<div style="left:1441px;top:620px;width:1px;height:20px;background:#dfe7f5;"></div>
<div style="left:1551px;top:620px;width:1px;height:20px;background:#dfe7f5;"></div>
<svg style="position:absolute;left:10px;top:624px" width="10" height="12" viewBox="0 0 10 12"><path d="M2.6 2.4 L6.6 5.6 L2.6 8.8" fill="none" stroke="#707070" stroke-width="1.9"/></svg>
<div style="left:5px;top:641px;width:1548px;height:4px;background:#fff;"></div>
<div style="left:8px;top:640px;width:1545px;height:1px;background:#b0b0b0;"></div>
</div>
</body></html>
